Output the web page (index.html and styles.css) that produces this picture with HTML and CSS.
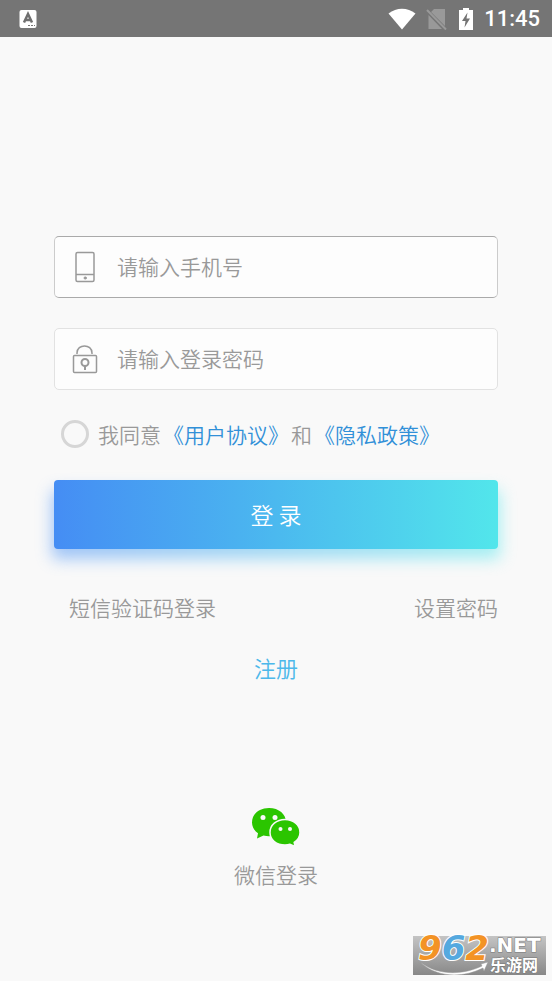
FILE: index.html
```html
<!DOCTYPE html>
<html lang="zh-CN">
<head>
<meta charset="utf-8">
<meta name="viewport" content="width=device-width, initial-scale=1">
<title>登录</title>
<link rel="stylesheet" href="styles.css">
</head>
<body>
<header class="status">
  <svg class="status-app" width="18" height="20" viewBox="0 0 18 20" aria-hidden="true">
    <rect x="0.500" y="1" width="17" height="18" rx="2" fill="#fff"/>
    <path d="M5 13.500L9 5L13 13.500M6.500 11H11.500" fill="none" stroke="#6f6f6f" stroke-width="2.500"/>
    <path d="M9 16.500h2M12 16.500h2M15 16.500h1" stroke="#777" stroke-width="1"/>
  </svg>
  <div class="status-icons">
    <svg width="28" height="22" viewBox="0 0 28 22" aria-hidden="true"><path d="M0.500 5.500C8.500-1 19.500-1 27.500 5.500L14 21.500Z" fill="#fff"/></svg>
    <svg width="22" height="22" viewBox="0 0 22 22" aria-hidden="true"><path d="M8 1H19V18L5 4ZM2.500 7L16 21H2.500Z" fill="#999"/><path d="M1 2L20 21.500" stroke="#999" stroke-width="2"/></svg>
    <svg width="16" height="24" viewBox="0 0 16 24" aria-hidden="true"><path d="M5 1H11V3H15V23H1V3H5Z" fill="#fff"/><path d="M9.500 5.500L4 14H7.500L6.500 20.500L12 11.500H8.500Z" fill="#747474"/></svg>
    <time class="clock">11:45</time>
  </div>
</header>
<main class="page">
  <form class="login">
    <label class="field field-active">
      <svg class="field-icon" width="32" height="32" viewBox="0 0 32 32" aria-label="手机号" fill="none" stroke="#999" stroke-width="1.500">
        <rect x="7" y="1.500" width="18" height="29" rx="1.500"/><path d="M7 23.500H25"/><rect x="15" y="26" width="2.500" height="2" rx="1" fill="#999" stroke-width="1"/>
      </svg>
      <input class="field-input" type="tel" placeholder="请输入手机号">
    </label>
    <label class="field">
      <svg class="field-icon" width="32" height="32" viewBox="0 0 32 32" aria-label="登录密码" fill="none" stroke="#999" stroke-width="1.500">
        <rect x="4.500" y="12.500" width="23" height="17" rx="1"/><path d="M8 11V10C8 0.500 23 0.500 23 10V11"/><circle cx="16" cy="19.500" r="3.500" stroke-width="2"/><path d="M16 23V27" stroke-width="2"/>
      </svg>
      <input class="field-input" type="password" placeholder="请输入登录密码">
    </label>
    <div class="agree">
      <input class="agree-box" type="checkbox" id="agree">
      <p class="agree-text"><label for="agree">我同意</label><a href="#terms">《用户协议》</a>和<a href="#privacy">《隐私政策》</a></p>
    </div>
    <button class="submit" type="submit">登 录</button>
  </form>
  <nav class="links">
    <a href="#sms">短信验证码登录</a>
    <a href="#password">设置密码</a>
  </nav>
  <a class="register" href="#register">注册</a>
  <a class="wechat" href="#wechat">
    <svg width="50" height="40" viewBox="0 0 50 40" aria-hidden="true">
      <path d="M18 1C8 1 1 7.200 1 15.500C1 20 3.500 23.800 7 26.200L6 31.500L12.500 28.500C14.500 29 16 29.200 18 29.200C28 29.200 35 23 35 15.200C35 7.200 28 1 18 1Z" fill="#2bc500"/>
      <path d="M34 12.500C25.500 12.500 19 18 19 25.500C19 33 25.500 38 34 38C35.800 38 37.500 37.800 39 37.300L44 39.500L43.200 35.400C46.800 33 49 29.500 49 25.500C49 18 42.500 12.500 34 12.500Z" fill="#2bc500" stroke="#f9f9f9" stroke-width="1.500"/>
      <g fill="#f9f9f9"><circle cx="12" cy="10.500" r="2.500"/><circle cx="24" cy="10.500" r="2.500"/><circle cx="29.500" cy="22" r="2"/><circle cx="39" cy="22" r="2"/></g>
    </svg>
    <span>微信登录</span>
  </a>
</main>
<svg class="watermark" width="133" height="50" viewBox="0 -11 133 50" role="img" aria-label="962.NET 乐游网">
  <defs><linearGradient id="plate" x1="0" y1="0" x2="0" y2="1"><stop offset="0" stop-color="#c4c4c4"/><stop offset="1" stop-color="#888"/></linearGradient></defs>
  <rect width="133" height="39" fill="url(#plate)"/>
  <path d="M7 26C25 40 50 39 69 30L68 28L75 26L71 35L70 32C48 43 23 41 7 26Z" fill="#fff" stroke="#999" stroke-width="0.500"/>
  <text class="mark-digits" x="5" y="24"><tspan class="mark-orange">9</tspan><tspan class="mark-blue">6</tspan><tspan class="mark-orange">2</tspan></text>
  <text class="mark-net" x="76" y="16">.NET</text>
  <text class="mark-name" x="77" y="35">乐游网</text>
</svg>
</body>
</html>
```
FILE: styles.css
```css
* {
  box-sizing: border-box;
}

body {
  margin: 0;
  min-height: 100vh;
  position: relative;
  background: #f9f9f9;
  color: #999;
  font: 350 21px/32px "Noto Sans CJK SC", sans-serif;
}

a {
  color: inherit;
  text-decoration: none;
}

svg {
  display: block;
}

.status {
  display: flex;
  align-items: center;
  justify-content: space-between;
  height: 37px;
  padding: 0 12px 0 19px;
  background: #757575;
}

.status-icons {
  display: flex;
  align-items: center;
  gap: 10px;
}

.clock {
  color: #fff;
  font: 500 22px/36px Roboto, sans-serif;
}

.page {
  display: flex;
  flex-direction: column;
  padding: 199px 54px 40px;
}

.login {
  position: relative;
  z-index: 0;
  display: flex;
  flex-direction: column;
}

.field {
  display: flex;
  align-items: center;
  gap: 16px;
  height: 62px;
  margin-bottom: 30px;
  padding: 0 14px;
  border: 1px solid #e2e2e2;
  border-radius: 5px;
  background: #fdfdfd;
}

.field-active {
  border-color: #aaa #ccc;
}

.field-icon {
  flex: none;
}

.field-input {
  flex: 1;
  min-width: 0;
  padding: 0 0 2px;
  border: 0;
  outline: 0;
  background: none;
  color: #666;
  font: inherit;
}

.field-input::placeholder {
  color: #999;
  opacity: 1;
}

.agree {
  display: flex;
  align-items: center;
  gap: 9px;
  margin-top: -2px;
  padding-left: 7px;
}

.agree-box {
  flex: none;
  appearance: none;
  width: 28px;
  height: 28px;
  margin: 0;
  border: 3px solid #d6d6d6;
  border-radius: 50%;
}

.agree-box:checked {
  background: #4890f2;
}

.agree-text {
  margin: 0;
}

.agree-text a {
  margin: 0 2px;
  color: #3190d8;
}

.submit {
  height: 69px;
  margin-top: 30px;
  padding: 0 0 2px;
  border: 0;
  border-radius: 4px;
  background: linear-gradient(90deg, #458df4, #4bb9ef 50%, #52e6eb);
  color: #fff;
  font: inherit;
  font-size: 23px;
  position: relative;
}

.submit::before {
  content: "";
  position: absolute;
  z-index: -1;
  inset: 10px -2px -10px;
  border-radius: 4px;
  background: linear-gradient(90deg, #458df4, #4bb9ef 50%, #52e6eb);
  filter: blur(8px);
  opacity: 0.5;
}

.links {
  display: flex;
  justify-content: space-between;
  margin-top: 42px;
  padding-left: 15px;
}

.register {
  align-self: center;
  margin-top: 28px;
  color: #4cb8ea;
  font-size: 22px;
}

.wechat {
  display: flex;
  flex-direction: column;
  align-items: center;
  align-self: center;
  gap: 11px;
  margin-top: 124px;
}

.watermark {
  position: absolute;
  right: 6px;
  bottom: 6px;
}

.mark-digits {
  font: italic 700 34px "DejaVu Sans", sans-serif;
  stroke: #fff;
  stroke-width: 2px;
  paint-order: stroke;
}

.mark-orange {
  fill: #f39325;
}

.mark-blue {
  fill: #55a9df;
}

.mark-net,
.mark-name {
  fill: #fff;
  stroke: #777;
  stroke-width: 1px;
  paint-order: stroke;
}

.mark-net {
  font: 700 20px "DejaVu Sans", sans-serif;
}

.mark-name {
  font: 700 16px "Noto Sans CJK SC", sans-serif;
}
```
